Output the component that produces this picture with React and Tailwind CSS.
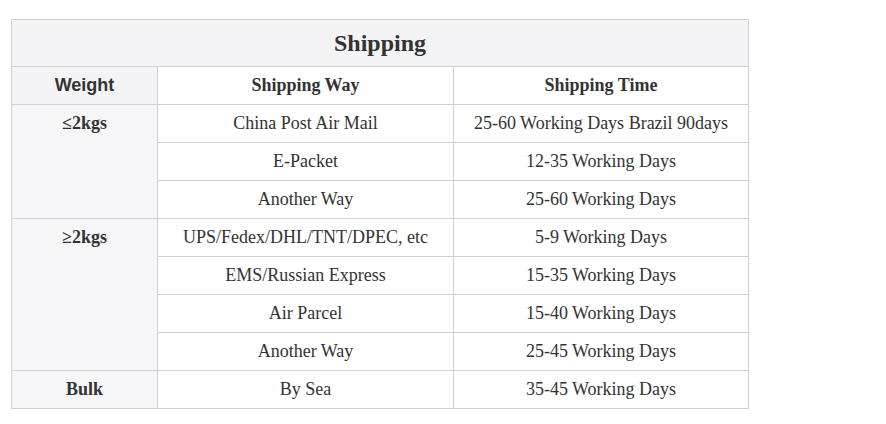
import React from 'react';

const serif = "font-['Liberation_Serif','Times_New_Roman',serif]";

const rows = [
  { weight: '≤2kgs', span: 3, way: 'China Post Air Mail', time: '25-60 Working Days Brazil 90days' },
  { way: 'E-Packet', time: '12-35 Working Days' },
  { way: 'Another Way', time: '25-60 Working Days' },
  { weight: '≥2kgs', span: 4, way: 'UPS/Fedex/DHL/TNT/DPEC, etc', time: '5-9 Working Days' },
  { way: 'EMS/Russian Express', time: '15-35 Working Days' },
  { way: 'Air Parcel', time: '15-40 Working Days' },
  { way: 'Another Way', time: '25-45 Working Days' },
  { weight: 'Bulk', span: 1, way: 'By Sea', time: '35-45 Working Days' },
];

export default function App() {
  return (
    <div className={`bg-white w-[886px] h-[424px] pt-[19px] pl-[11px] text-[#333] ${serif}`}>
      <table className="border-collapse w-[737px] table-fixed text-center text-[18px]">
        <colgroup>
          <col className="w-[146px]" />
          <col className="w-[296px]" />
          <col className="w-[295px]" />
        </colgroup>
        <thead>
          <tr className="h-[47px] bg-[#f4f4f6]">
            <th colSpan={3} className="border border-[#d0d0d0] text-[24px] font-bold">Shipping</th>
          </tr>
          <tr className="h-[38px]">
            <th className="border border-[#d0d0d0] bg-[#f4f4f6] font-['Liberation_Sans',Arial,sans-serif] text-[18px] font-bold">Weight</th>
            <th className="border border-[#d0d0d0] font-bold">Shipping Way</th>
            <th className="border border-[#d0d0d0] font-bold">Shipping Time</th>
          </tr>
        </thead>
        <tbody>
          {rows.map((r, i) => (
            <tr key={i} className="h-[38px]">
              {r.weight && (
                <td
                  rowSpan={r.span}
                  className={`border border-[#d0d0d0] bg-[#f6f6f9] font-bold ${r.span > 1 ? 'align-top pt-[5px]' : ''}`}
                >
                  {r.weight}
                </td>
              )}
              <td className="border border-[#d0d0d0]">{r.way}</td>
              <td className="border border-[#d0d0d0]">{r.time}</td>
            </tr>
          ))}
        </tbody>
      </table>
    </div>
  );
}
